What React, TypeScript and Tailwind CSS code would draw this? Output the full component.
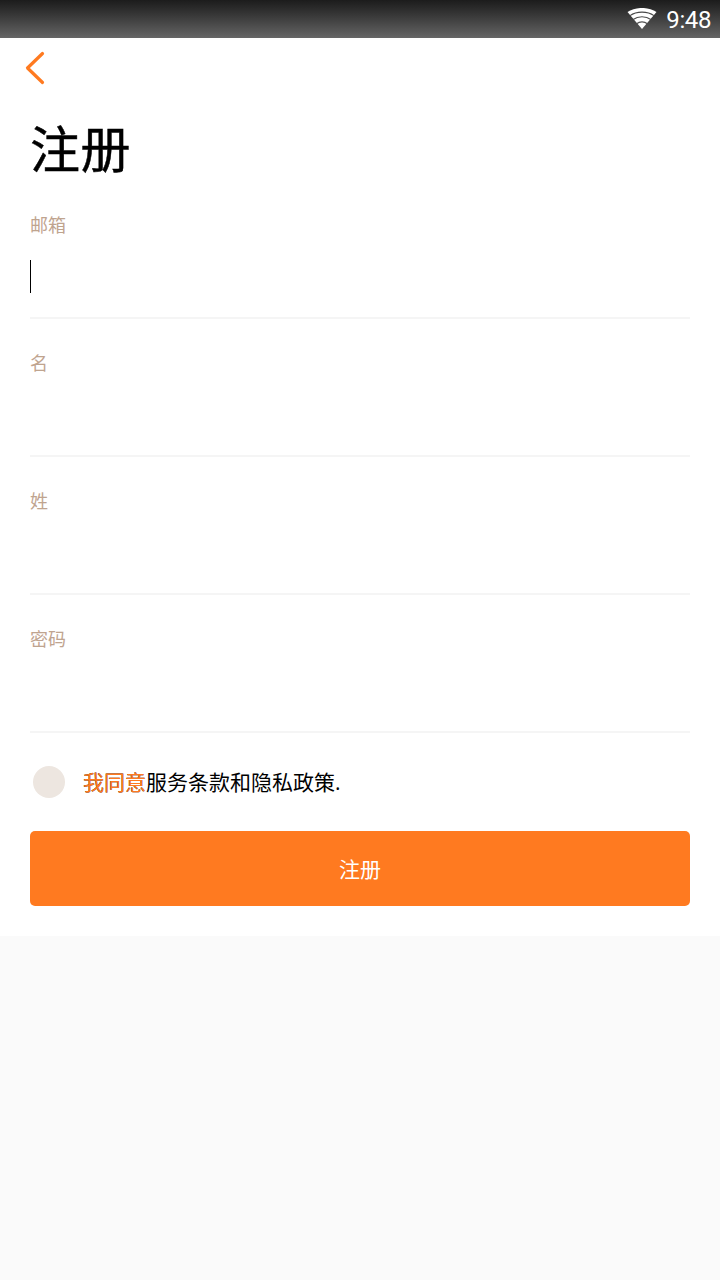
import { useState } from 'react';

const fields = [
  { id: 'email', label: '邮箱', type: 'email' },
  { id: 'firstName', label: '名', type: 'text' },
  { id: 'lastName', label: '姓', type: 'text' },
  { id: 'password', label: '密码', type: 'password' },
];

function StatusBar() {
  return (
    <div className="flex h-[38px] items-center justify-end bg-linear-to-b from-[#1c1c1c] to-[#666666] pr-[9px] text-white">
      <svg className="mr-[9px] h-[22px] w-[30px]" viewBox="0 0 30 22" fill="none">
        <path d="M15 21 0.5 4C8.5-1.4 21.5-1.4 29.5 4Z" fill="#fff" />
        <path d="M3 7.6C9.5 2.9 20.5 2.9 27 7.6" stroke="#484848" strokeWidth="1.1" />
        <path d="M6.2 11.5C11 7.9 19 7.9 23.8 11.5" stroke="#4d4d4d" strokeWidth="1.1" />
        <path d="M9.6 15.7C12.7 13.3 17.3 13.3 20.4 15.7" stroke="#525252" strokeWidth="1.1" />
      </svg>
      <span className="pt-[2px] font-['Roboto',sans-serif] text-[24px] leading-[36px] tracking-[-0.4px]">9:48</span>
    </div>
  );
}

function Field({ id, label, type, focused }: { id: string; label: string; type: string; focused: boolean }) {
  const [value, setValue] = useState('');

  return (
    <div className="flex h-[138px] flex-col border-b-2 border-[#f5f5f5] pt-[33px]">
      <label htmlFor={id} className="text-[18px] leading-5 text-[#bfa48f]">
        {label}
      </label>
      <div className="mt-[26px] flex h-[33px]">
        {focused && value === '' && <span className="w-px bg-black" />}
        <input
          id={id}
          type={type}
          value={value}
          onChange={(e) => setValue(e.target.value)}
          className="min-w-0 flex-1 bg-transparent text-[24px] outline-none"
        />
      </div>
    </div>
  );
}

export default function App() {
  const [agreed, setAgreed] = useState(false);

  return (
    <div className="min-h-screen bg-[#fafafa] font-['Noto_Sans_CJK_SC',sans-serif] text-black">
      <StatusBar />
      <main className="bg-white px-[30px] pb-[30px]">
        <button type="button" aria-label="返回" className="-ml-[5px] flex h-[60px] items-center">
          <svg className="h-[34px] w-5" viewBox="0 0 20 34" fill="none">
            <path
              d="M17.5 2.5 2.5 17 17.5 31.5"
              stroke="#ff7a20"
              strokeWidth="3.2"
              strokeLinecap="round"
              strokeLinejoin="round"
            />
          </svg>
        </button>

        <h1 className="h-[83px] pt-[18px] text-[50px] leading-[60px] tracking-[0.5px] [-webkit-text-stroke:0.5px_#000]">
          注册
        </h1>

        <form onSubmit={(e) => e.preventDefault()}>
          {fields.map((field, i) => (
            <Field key={field.id} {...field} focused={i === 0} />
          ))}

          <div className="flex h-[98px] items-center pl-[3px]">
            <button
              type="button"
              role="checkbox"
              aria-checked={agreed}
              aria-label="同意"
              onClick={() => setAgreed(!agreed)}
              className={agreed ? 'size-8 rounded-full bg-[#ff7a20]' : 'size-8 rounded-full bg-[#ede6e0]'}
            />
            <p className="ml-[18px] pb-[2px] text-[21px] leading-8">
              <span className="text-[#ff7a20] [text-shadow:0_0_0_#000]">我同意</span>
              服务条款和隐私政策<span className="font-['Open_Sans',sans-serif]">.</span>
            </p>
          </div>

          <button
            type="submit"
            className="h-[75px] w-full rounded-[5px] bg-[#ff7a20] text-[21px] text-white"
          >
            注册
          </button>
        </form>
      </main>
    </div>
  );
}
